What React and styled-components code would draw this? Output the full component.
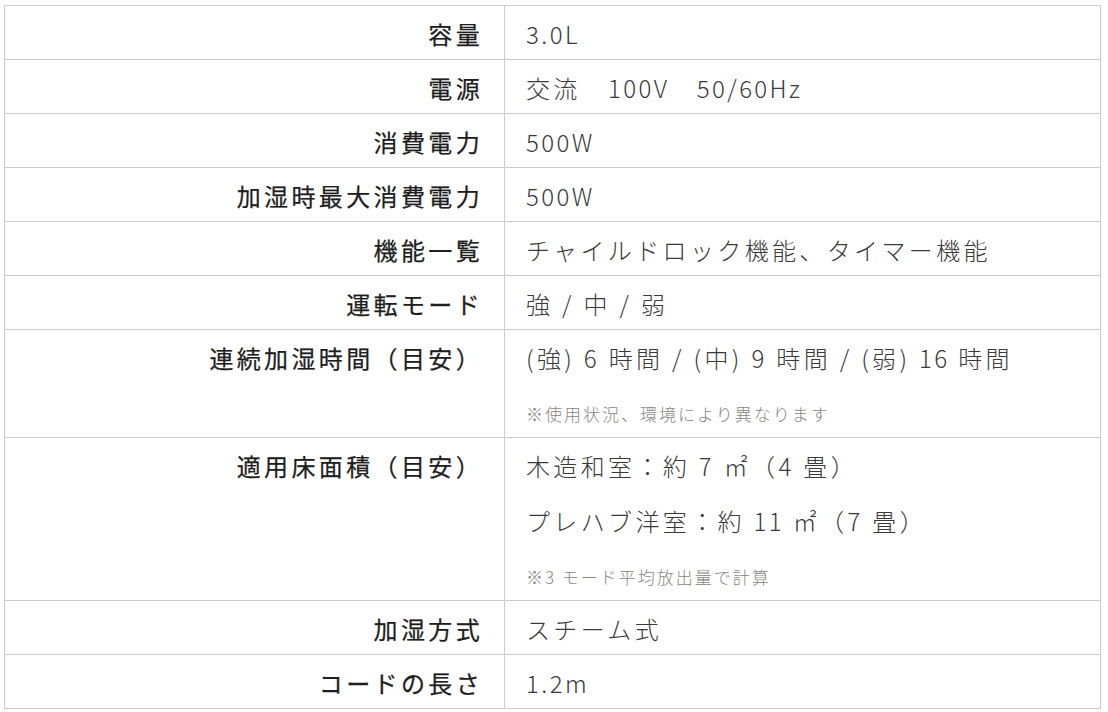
import React from "react";
import styled, { createGlobalStyle } from "styled-components";

const Global = createGlobalStyle`
  html, body { margin: 0; padding: 0; background: #fff; }
  body {
    font-family: "Noto Sans CJK JP", "Noto Sans", sans-serif;
    color: #333;
    -webkit-font-smoothing: antialiased;
  }
`;

const Page = styled.div`
  padding: 5px 0 0 4px;
  width: 1097px;
`;

const Table = styled.div`
  border-top: 1px solid #cbcbcb;
  border-left: 1px solid #cbcbcb;
  border-right: 1px solid #cbcbcb;
`;

const Row = styled.div`
  display: grid;
  grid-template-columns: 500px 1fr;
  border-bottom: 1px solid #cbcbcb;
`;

const Label = styled.div`
  border-right: 1px solid #cbcbcb;
  padding: 13px 21px 10px 21px;
  text-align: right;
  font-size: 24px;
  line-height: 30px;
  font-weight: 400;
  letter-spacing: 0.14em;
  color: #1e1e1e;
  -webkit-text-stroke: 0.25px #1e1e1e;
  white-space: nowrap;
`;

const Value = styled.div`
  display: flex;
  flex-direction: column;
  padding: 13px 21px 10px 21px;
`;

const Line = styled.div`
  font-size: 24px;
  line-height: 30px;
  font-weight: 300;
  letter-spacing: 0.14em;
  color: #3a3a3a;
  white-space: pre;
  & + & { margin-top: 25px; }
`;

const Latin = styled.span`
  letter-spacing: 0.1em;
`;

const Note = styled.div`
  margin-top: 28px;
  font-size: 17px;
  line-height: 26px;
  font-weight: 300;
  letter-spacing: 2px;
  color: #8b857e;
  white-space: pre;
`;

const specs = [
  { label: "容量", lines: ["3.0L"] },
  { label: "電源", lines: ["交流　100V　50/60Hz"] },
  { label: "消費電力", lines: ["500W"] },
  { label: "加湿時最大消費電力", lines: ["500W"] },
  { label: "機能一覧", lines: ["チャイルドロック機能、タイマー機能"] },
  { label: "運転モード", lines: ["強 / 中 / 弱"] },
  {
    label: "連続加湿時間（目安）",
    lines: ["(強) 6 時間 / (中) 9 時間 / (弱) 16 時間"],
    note: "※使用状況、環境により異なります",
  },
  {
    label: "適用床面積（目安）",
    lines: ["木造和室：約 7 ㎡（4 畳）", "プレハブ洋室：約 11 ㎡（7 畳）"],
    note: "※3 モード平均放出量で計算",
  },
  { label: "加湿方式", lines: ["スチーム式"] },
  { label: "コードの長さ", lines: ["1.2m"] },
];

function renderText(text) {
  return text.split(/([0-9A-Za-z./]{2,})/).map((part, i) =>
    i % 2 === 1 ? <Latin key={i}>{part}</Latin> : part
  );
}

export default function App() {
  return (
    <>
      <Global />
      <Page>
        <Table>
          {specs.map((s) => (
            <Row key={s.label}>
              <Label>{s.label}</Label>
              <Value>
                {s.lines.map((l) => (
                  <Line key={l}>{renderText(l)}</Line>
                ))}
                {s.note && <Note>{s.note}</Note>}
              </Value>
            </Row>
          ))}
        </Table>
      </Page>
    </>
  );
}
